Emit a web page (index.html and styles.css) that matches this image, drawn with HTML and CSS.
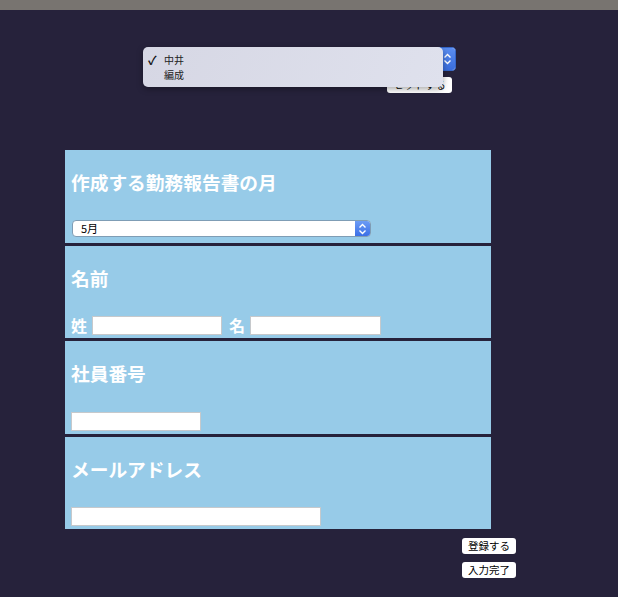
FILE: index.html
```html
<!DOCTYPE html>
<html lang="ja">
<head>
<meta charset="utf-8">
<link rel="stylesheet" href="styles.css">
</head>
<body>
<div class="topbar"></div>
<header class="header">
  <div class="picker">
    <div class="select small">
      <span class="select-text">中井</span>
      <span class="select-arrow">
        <svg width="9" height="12" viewBox="0 0 9 12"><path d="M1.5 4.5 L4.5 1.5 L7.5 4.5 M1.5 7.5 L4.5 10.5 L7.5 7.5" fill="none" stroke="#fff" stroke-width="1.4"/></svg>
      </span>
    </div>
    <button class="btn top-btn">セットする</button>
  </div>
  <div class="popup">
    <div class="popup-item"><span class="check">✓</span>中井</div>
    <div class="popup-item"><span class="check"></span>編成</div>
  </div>
</header>
<main class="wrap">
  <form class="form">
    <section class="sec tall">
      <h3 class="sec-title">作成する勤務報告書の月</h3>
      <div class="row">
        <div class="select month">
          <span class="select-text">5月</span>
          <span class="select-arrow">
            <svg width="9" height="12" viewBox="0 0 9 12"><path d="M1.5 4.5 L4.5 1.5 L7.5 4.5 M1.5 7.5 L4.5 10.5 L7.5 7.5" fill="none" stroke="#fff" stroke-width="1.4"/></svg>
          </span>
        </div>
      </div>
    </section>
    <section class="sec">
      <h3 class="sec-title">名前</h3>
      <div class="row">
        <label class="lbl">姓</label><input class="inp w130" type="text">
        <label class="lbl lbl2">名</label><input class="inp w131" type="text">
      </div>
    </section>
    <section class="sec tall">
      <h3 class="sec-title">社員番号</h3>
      <div class="row"><input class="inp w130" type="text"></div>
    </section>
    <section class="sec">
      <h3 class="sec-title">メールアドレス</h3>
      <div class="row"><input class="inp w250" type="text"></div>
    </section>
  </form>
  <div class="actions">
    <button class="btn">登録する</button>
    <button class="btn">入力完了</button>
  </div>
</main>
</body>
</html>
```
FILE: styles.css
```css
html, body {
  margin: 0;
  padding: 0;
  background: #26223b;
  font-family: "Noto Sans CJK JP", "Noto Sans", sans-serif;
}
.topbar {
  height: 10px;
  background: #787470;
}
.header {
  position: relative;
  height: 140px;
}
.picker {
  width: 456px;
  padding-top: 37px;
  display: flex;
  flex-direction: column;
  align-items: flex-end;
}
.select {
  display: flex;
  align-items: center;
  background: #fff;
  border: 1px solid #7f9db5;
  border-radius: 4px;
  box-sizing: border-box;
  overflow: hidden;
  font-size: 11px;
  color: #000;
}
.select-text {
  flex: 1;
  padding-left: 8px;
  line-height: 1;
}
.select-arrow {
  width: 15px;
  align-self: stretch;
  display: flex;
  align-items: center;
  justify-content: center;
  background: linear-gradient(#6c9cf5, #3b6fe6);
}
.select.small {
  width: 160px;
  height: 24px;
  border-color: #3566c8;
}
.select.small .select-arrow {
  width: 16px;
  background: linear-gradient(#5a8df0, #3a6ddc);
}
.picker .top-btn {
  margin-top: 6px;
  margin-right: 4px;
  width: 65px;
}
.popup {
  position: absolute;
  left: 143px;
  top: 37px;
  width: 300px;
  height: 40px;
  box-sizing: border-box;
  padding-top: 5px;
  border-radius: 5px;
  background: linear-gradient(110deg, #d6d7e4, #dfe1ed);
  box-shadow: 0 2px 6px rgba(0,0,0,0.35);
  font-size: 10px;
  color: #222;
}
.popup-item {
  display: flex;
  align-items: center;
  height: 15px;
  padding-left: 5px;
}
.check {
  width: 16px;
  font-size: 12px;
  font-weight: bold;
  color: #111;
}
.wrap {
  margin-left: 65px;
  width: 451px;
  display: flex;
  flex-direction: column;
  align-items: flex-start;
}
.form {
  width: 426px;
  display: flex;
  flex-direction: column;
  gap: 3px;
  margin: 0;
}
.sec {
  height: 92px;
  box-sizing: border-box;
  background: #97cbe8;
  padding: 18px 6px 3px 6px;
  display: flex;
  flex-direction: column;
}
.sec.tall {
  height: 93px;
}
.sec-title {
  margin: 0;
  font-size: 18.72px;
  line-height: 27px;
  font-weight: bold;
  color: #fff;
}
.row {
  margin-top: auto;
  display: flex;
  align-items: center;
  gap: 5px;
}
.sec.tall:first-child .row {
  margin-bottom: 3px;
}
.select.month {
  width: 299px;
  height: 17px;
  margin-left: 1px;
}
.lbl {
  color: #fff;
  font-size: 16px;
  font-weight: bold;
  line-height: 19px;
}
.lbl2 {
  margin-left: 2px;
}
.inp {
  height: 19px;
  box-sizing: border-box;
  border: 1px solid #c6c9cc;
  background: #fff;
  margin: 0;
  padding: 0;
}
.w130 { width: 130px; }
.w131 { width: 131px; }
.w250 { width: 250px; }
.actions {
  align-self: flex-end;
  display: flex;
  flex-direction: column;
  gap: 8px;
  margin-top: 9px;
}
.btn {
  width: 54px;
  height: 16px;
  padding: 0;
  border: none;
  border-radius: 3px;
  background: #fff;
  color: #000;
  font-family: "Noto Sans CJK JP", sans-serif;
  font-size: 10.5px;
  line-height: 16px;
}
```
